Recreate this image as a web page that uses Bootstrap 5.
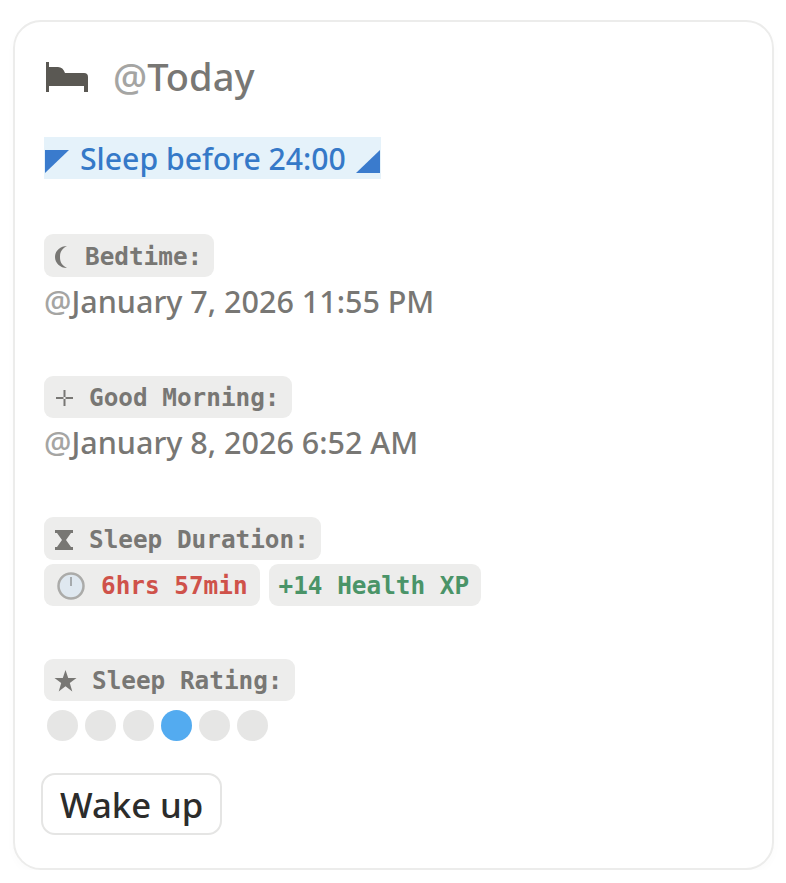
<!DOCTYPE html>
<html lang="en">

<head>
    <meta charset="UTF-8">
    <meta name="viewport" content="width=device-width, initial-scale=1.0">
    <title>Sleep</title>
    <link href="https://cdn.jsdelivr.net/npm/bootstrap@5.3.0/dist/css/bootstrap.min.css" rel="stylesheet">
    <style>
        body {
            background: #fff;
            font-family: "Noto Sans", "Open Sans", sans-serif;
            font-weight: 500;
            color: #787774;
        }

        .sleep-card {
            width: 761px;
            height: 850px;
            margin: 20px 0 0 13px;
            padding: 34px 29px 0 29px;
            border: 2.5px solid #ececeb;
            border-radius: 28px;
            box-shadow: 0 4px 10px rgba(0, 0, 0, .02);
        }

        .sleep-head {
            height: 42px;
            font-size: 38px;
            line-height: 42px;
        }

        .head-label {
            padding-bottom: 3px;
        }

        .bed-icon {
            width: 42px;
            height: 30px;
            margin: 0 25px 0 2px;
        }

        .at-sign {
            color: #a5a5a3;
        }

        .goal-bar {
            height: 42px;
            margin-top: 39px;
            padding: 0 1px;
            background: #e5f2fa;
            color: #3579c8;
            font-size: 30.2px;
            line-height: 42px;
        }

        .goal-bar svg {
            width: 24px;
            height: 23px;
            margin-top: 6px;
        }

        .goal-text {
            margin: 0 2px 0 3px;
            padding-top: 2px;
        }

        .tag-chip {
            height: 42.5px;
            padding: 1.5px 12px 0 10px;
            background: #ededec;
            border-radius: 9px;
            font-family: "DejaVu Sans Mono", "Liberation Mono", monospace;
            font-weight: 700;
            font-size: 24.35px;
            line-height: 42px;
            white-space: pre;
        }

        .chip-glyph {
            display: inline-block;
            vertical-align: -3px;
            height: 22px;
        }

        .glyph-moon { width: 31px; }
        .glyph-wide { width: 35px; }
        .glyph-star { width: 38px; }

        .stamp-line {
            height: 50px;
            font-size: 30.5px;
            line-height: 48px;
        }

        .chip-row {
            height: 50px;
            padding-top: 4px;
            gap: 9px;
        }

        .clock-icon {
            margin: 0 16px 0 3px;
        }

        .text-late { color: #cf524a; }
        .text-xp { color: #4a9468; }

        .sleep-block {
            margin-top: 55px;
        }

        .sleep-block+.sleep-block {
            margin-top: 49px;
        }

        .rate-row {
            gap: 7px;
            margin: 9px 0 0 2.5px;
        }

        .rate-dot {
            width: 31px;
            height: 31px;
            border-radius: 50%;
            background: #e6e6e5;
        }

        .rate-dot.is-on {
            background: #53abf0;
        }

        .wake-btn {
            height: 62px;
            margin: 32px 0 0 -3px;
            padding: 2px 17px 0 17px;
            background: #fff;
            border: 2px solid #e5e5e4;
            border-radius: 14px;
            color: #2c2c2b;
            font-size: 34.7px;
            font-weight: 500;
            line-height: 1;
        }
    </style>
</head>

<body>
    <div class="sleep-card">
        <!-- Titulo -->
        <div class="sleep-head d-flex align-items-center">
            <svg class="bed-icon" viewBox="0 0 42 30">
                <path fill="#5a5853" d="M0 0h3v5h9q5 0 7 6h19q4 0 4 4v15h-4v-6H3v6H0z" />
            </svg>
            <span class="head-label"><span class="at-sign">@</span>Today</span>
        </div>

        <div class="goal-bar d-inline-flex align-items-center gap-2">
            <svg viewBox="0 0 24 23"><path fill="#3a7bcd" d="M0 0h24L0 23z" /></svg>
            <span class="goal-text">Sleep before 24:00</span>
            <svg viewBox="0 0 24 23"><path fill="#3a7bcd" d="M24 0v23H0z" /></svg>
        </div>

        <div class="sleep-block">
            <div class="d-flex"><span class="tag-chip"><svg class="chip-glyph glyph-moon" viewBox="0 0 31 22"><path fill="#787774" d="M13 0C7 3 6 7 6 11s1 8 7 11C6 22 1 17 1 11S6 0 13 0z" /></svg>Bedtime:</span></div>
            <div class="stamp-line"><span class="at-sign">@</span>January 7, 2026 11:55 PM</div>
        </div>

        <div class="sleep-block">
            <div class="d-flex"><span class="tag-chip"><svg class="chip-glyph glyph-wide" viewBox="0 0 35 22"><path fill="none" stroke="#787774" stroke-width="2" d="M2 11h7.500M11.500 11H19M10.500 3v7M10.500 12v7" /></svg>Good Morning:</span></div>
            <div class="stamp-line"><span class="at-sign">@</span>January 8, 2026 6:52 AM</div>
        </div>

        <div class="sleep-block">
            <div class="d-flex"><span class="tag-chip"><svg class="chip-glyph glyph-wide" viewBox="0 0 35 22"><path fill="#787774" d="M1 1h18v3h-2l-5 7 5 7h2v3H1v-3h2l5-7-5-7H1z" /></svg>Sleep Duration:</span></div>
            <div class="chip-row d-flex">
                <span class="tag-chip d-flex align-items-center">
                    <svg width="28" height="28" viewBox="0 0 28 28" class="clock-icon">
                        <circle cx="14" cy="14" r="12.500" fill="#dfe8f0" stroke="#ababa9" stroke-width="2.500" />
                        <path d="M14 5v9" stroke="#6d6d6b" stroke-width="1" />
                    </svg><span class="text-late">6hrs 57min</span>
                </span>
                <span class="tag-chip text-xp">+14 Health XP</span>
            </div>
        </div>

        <div class="sleep-block">
            <div class="d-flex"><span class="tag-chip"><svg class="chip-glyph glyph-star" viewBox="0 0 38 22"><path fill="#787774" d="M11.500 0l2.700 8h8.300l-6.700 5 2.500 8.500-6.800-5.200-6.800 5.200 2.500-8.500L.5 8h8.300z" /></svg>Sleep Rating:</span></div>
            <div class="rate-row d-flex">
                <span class="rate-dot"></span>
                <span class="rate-dot"></span>
                <span class="rate-dot"></span>
                <span class="rate-dot is-on"></span>
                <span class="rate-dot"></span>
                <span class="rate-dot"></span>
            </div>
        </div>

        <button type="button" class="wake-btn d-block">Wake up</button>
    </div>

    <script src="https://cdn.jsdelivr.net/npm/bootstrap@5.3.0/dist/js/bootstrap.bundle.min.js"></script>
</body>

</html>
